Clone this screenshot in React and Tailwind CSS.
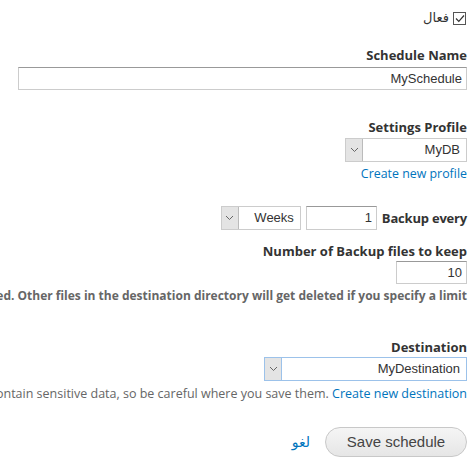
import React from "react";

const label = "text-[13px] font-bold text-[#333] leading-[18px] font-['Open_Sans',sans-serif]";
const inputCls =
  "h-[23px] border border-[#ccc] border-t-[#999] bg-white text-[13px] text-[#333] leading-[21px] px-[4px] text-right font-['Liberation_Sans',Arial,sans-serif]";

const Chevron = () => (
  <svg width="9" height="6" viewBox="0 0 9 6" fill="none">
    <path d="M1 1l3.5 3.5L8 1" stroke="#666" strokeWidth="1" />
  </svg>
);

// fake select, arrow box on the left as in the rtl page
const FakeSelect = ({ value, width, blue }) => (
  <div
    dir="ltr"
    className={
      "flex h-[24px] bg-white border " +
      (blue ? "border-[#9cc2ea]" : "border-[#ccc]") +
      " " +
      width
    }
  >
    <div
      className={
        "flex items-center justify-center w-[17px] bg-[#e4e4e4] border-r " +
        (blue ? "border-[#9cc2ea]" : "border-[#bbb]")
      }
    >
      <Chevron />
    </div>
    <div className="flex-1 text-right pr-[6px] text-[13px] leading-[22px] text-[#333] font-['Liberation_Sans',Arial,sans-serif]">
      {value}
    </div>
  </div>
);

export default function App() {
  return (
    <div
      dir="rtl"
      className="w-[474px] h-[460px] overflow-hidden bg-white pr-[7px] flex flex-col items-start font-['Open_Sans',sans-serif]"
    >
      {/* status */}
      <div className="mt-[11px] h-[14px] flex items-center gap-[4px]">
        <span className="w-[13px] h-[13px] border border-[#555] bg-white flex items-center justify-center mr-[1px]">
          <svg width="10" height="9" viewBox="0 0 10 9" fill="none">
            <path d="M1 4.5l2.8 2.8L9 1.5" stroke="#333" strokeWidth="1.2" />
          </svg>
        </span>
        <span className="text-[13px] text-[#333] font-['DejaVu_Sans',sans-serif]">فعال</span>
      </div>

      <div className={label + " mt-[21px]"}>Schedule Name</div>
      <div className={inputCls + " mt-[3px] w-[449px]"}>MySchedule</div>

      <div className={label + " mt-[28px]"}>Settings Profile</div>
      <div className="mt-[2px]">
        <FakeSelect value="MyDB" width="w-[122px]" />
      </div>
      <a className="mt-[3px] text-[12.4px] leading-[18px] text-[#0074bd]">Create new profile</a>

      <div className="mt-[23px] flex items-center gap-[5px]">
        <div className={label + " tracking-[-0.2px]"}>Backup every</div>
        <div className={inputCls + " w-[71px] h-[24px]"}>1</div>
        <FakeSelect value="Weeks" width="w-[80px]" />
      </div>

      <div className={label + " mt-[12px]"}>Number of Backup files to keep</div>
      <div className={inputCls + " mt-[1px] w-[71px]"}>10</div>
      <div className="mt-[3px] w-[467px] whitespace-nowrap text-right text-[12px] leading-[18px] font-bold text-[#666]">
        The number of backup files to keep before old ones are deleted. Other files in the destination directory will get deleted if you specify a limit
      </div>

      <div className={label + " mt-[33px]"}>Destination</div>
      <div className="mt-[1px]">
        <FakeSelect value="MyDestination" width="w-[203px]" blue />
      </div>
      <div className="mt-[4px] w-[467px] whitespace-nowrap text-right text-[12.5px] leading-[18px] text-[#666]">
        Backup files may contain sensitive data, so be careful where you save them.{" "}
        <a className="text-[#0074bd]">Create new destination</a>
      </div>

      <div className="mt-[24px] flex items-center gap-[15px]">
        <button className="h-[30px] w-[142px] rounded-full border border-[#c8c8c8] bg-gradient-to-b from-[#f5f5f5] to-[#e6e6e6] text-[15px] text-[#444] font-['Liberation_Sans',Arial,sans-serif]">
          Save schedule
        </button>
        <a className="text-[14px] text-[#0074bd] font-['DejaVu_Sans',sans-serif]">لغو</a>
      </div>
    </div>
  );
}
